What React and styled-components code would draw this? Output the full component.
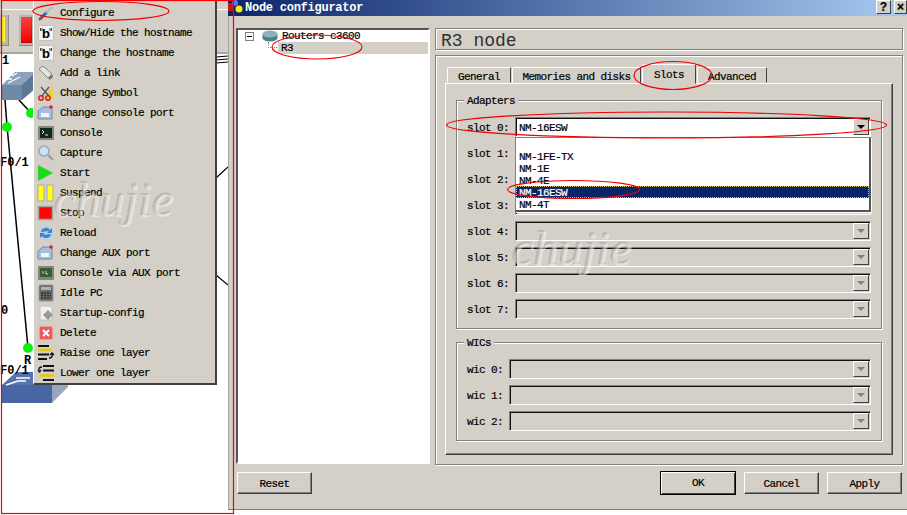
import React from 'react';
import styled, { createGlobalStyle } from 'styled-components';

const GlobalStyle = createGlobalStyle`
  html, body { margin:0; padding:0; background:#fff; overflow:hidden; }
  body {
    font-family:"Liberation Mono", monospace;
    font-size:11px;
    letter-spacing:-0.6px;
    color:#000;
    -webkit-text-stroke:0.2px #000;
  }
  * { box-sizing:border-box; }
`;

const Screen = styled.div`
  position:relative;
  width:907px;
  height:515px;
  display:flex;
  align-items:flex-start;
  overflow:hidden;
`;

/* left side: the topology window behind the dialog */
const LeftPane = styled.div`
  position:relative;
  width:228px;
  height:515px;
  display:flex;
  flex-direction:column;
  background:#d4d0c8;
`;

const Toolbar = styled.div`
  margin-top:9px;
  height:45px;
  border-top:1px solid #fff;
  border-bottom:2px solid #aaa79f;
  display:flex;
  align-items:flex-start;
  gap:10px;
  padding-top:5px;
`;

const ToolButton = styled.div`
  width:${p => p.$w}px;
  height:31px;
  padding:2px;
  background:#b9b6ae;
  border-right:1px solid #8c8a84;
  border-bottom:1px solid #8c8a84;
  &::after {
    content:'';
    display:block;
    height:100%;
    background:${p => p.$color};
    box-shadow:inset -1px -1px 0 #0003;
  }
`;

const Canvas = styled.div`
  flex:1;
  background:#fff;
`;

const CanvasDrawing = styled.svg`
  display:block;
  width:228px;
  height:461px;
  font-family:"Liberation Mono", monospace;
  font-weight:700;
  font-size:12px;
  letter-spacing:0;
`;

const Menu = styled.div`
  position:absolute;
  left:33px;
  top:0;
  width:184px;
  height:385px;
  padding-top:3px;
  background:#d4d0c8;
  border-left:1px solid #fff;
  border-right:2px solid #404040;
  border-bottom:2px solid #404040;
`;

const MenuItem = styled.div`
  height:20px;
  display:flex;
  align-items:center;
  padding-left:3px;
  gap:5px;
  white-space:nowrap;
`;

const IconBox = styled.svg`
  width:18px;
  height:18px;
  flex:none;
`;

const HostnameGlyph = styled.text`
  font-family:"Liberation Sans", sans-serif;
  font-size:13px;
  font-weight:700;
  letter-spacing:0;
  text-anchor:middle;
`;

/* right side: the dialog */
const Dialog = styled.div`
  width:679px;
  height:510px;
  display:flex;
  flex-direction:column;
  background:#d4d0c8;
  border-left:1px solid #a8a59e;
  border-bottom:1px solid #808080;
`;

const TitleBar = styled.div`
  height:16px;
  margin-left:-1px;
  display:flex;
  align-items:flex-start;
  background:linear-gradient(90deg,#0a246a,#a6caf0);
`;

const WindowIcon = styled.svg`
  width:15px;
  height:15px;
  flex:none;
`;

const TitleText = styled.div`
  flex:1;
  padding-left:2px;
  line-height:17px;
  color:#fff;
  font-size:12px;
  font-weight:700;
  letter-spacing:-0.25px;
  -webkit-text-stroke:0;
`;

const WindowButton = styled.div`
  width:${p => p.$w}px;
  height:14px;
  margin-left:${p => p.$gap}px;
  background:#d4d0c8;
  border:1px solid;
  border-color:#fff #404040 #404040 #fff;
  text-align:center;
  font-size:12px;
  line-height:12px;
  font-weight:700;
  letter-spacing:0;
  font-family:"Liberation Sans", sans-serif;
`;

const Body = styled.div`
  height:448px;
  display:flex;
  gap:5px;
  padding:12px 4px 0 7px;
`;

const Tree = styled.div`
  width:194px;
  height:436px;
  background:#fff;
  border:2px solid;
  border-color:#555 #fff #fff #555;
`;

const TreeRow = styled.div`
  height:12px;
  display:flex;
  align-items:center;
  white-space:nowrap;
  line-height:12px;
  padding-left:${p => p.$indent}px;
  background:${p => p.$selected ? 'linear-gradient(90deg,#fff 0,#fff 40px,#d4d0c8 40px)' : 'transparent'};
`;

const Expander = styled.span`
  position:relative;
  width:9px;
  height:9px;
  margin-right:8px;
  border:1px solid #808080;
  &::after {
    content:'';
    position:absolute;
    left:1px;
    top:3px;
    width:5px;
    height:1px;
    background:#000;
  }
`;

const Connector = styled.span`
  width:9px;
  height:6px;
  margin:-6px 4px 0 0;
  border-left:1px dotted #808080;
  border-bottom:1px dotted #808080;
`;

const TreeIcon = styled.svg`
  width:16px;
  height:12px;
  margin-right:4px;
`;

const Main = styled.div`
  width:468px;
  height:436px;
  display:flex;
  flex-direction:column;
  gap:5px;
`;

const NodeHeader = styled.div`
  height:22px;
  padding-left:5px;
  font-size:18px;
  line-height:25px;
  letter-spacing:0;
  color:#303030;
  -webkit-text-stroke:0;
  border:1px solid #808080;
  box-shadow:1px 1px 0 #fff, inset 1px 1px 0 #fff;
`;

const Frame = styled.div`
  flex:1;
  display:flex;
  flex-direction:column;
  padding:9px;
  border:1px solid #808080;
  box-shadow:1px 1px 0 #fff, inset 1px 1px 0 #fff;
`;

const TabBar = styled.div`
  height:18px;
  display:flex;
  align-items:flex-end;
  gap:1px;
  padding-left:2px;
`;

const Tab = styled.div`
  position:relative;
  z-index:${p => p.$selected ? 2 : 0};
  width:${p => p.$w}px;
  height:${p => p.$selected ? 20 : 16}px;
  margin-bottom:${p => p.$selected ? -1 : 0}px;
  text-align:center;
  line-height:${p => p.$selected ? 21 : 18}px;
  background:#d4d0c8;
  border:1px solid;
  border-color:#fff #404040 transparent #fff;
  border-radius:2px 2px 0 0;
`;

const TabPanel = styled.div`
  flex:1;
  padding:16px 10px 0;
  border:1px solid;
  border-color:#fff #404040 #404040 #fff;
  box-shadow:inset -1px -1px 0 #808080;
`;

const Group = styled.div`
  position:relative;
  display:flex;
  flex-direction:column;
  gap:6px;
  padding:16px 10px 9px;
  margin-bottom:13px;
  border:1px solid #808080;
  box-shadow:1px 1px 0 #fff, inset 1px 1px 0 #fff;
`;

const GroupTitle = styled.div`
  position:absolute;
  left:7px;
  top:-7px;
  padding:1px 3px 0;
  line-height:13px;
  background:#d4d0c8;
`;

const Row = styled.div`
  height:20px;
  display:flex;
  align-items:center;
`;

const RowLabel = styled.div`
  width:${p => p.$w}px;
  flex:none;
  margin-top:2px;
  white-space:nowrap;
`;

const Combo = styled.div`
  position:relative;
  flex:1;
  height:20px;
  padding-left:3px;
  line-height:20px;
  background:${p => p.$enabled ? '#fff' : '#d4d0c8'};
  border:1px solid;
  border-color:#808080 #fff #fff #808080;
  box-shadow:inset 1px 1px 0 #111;
`;

const ComboArrow = styled.div`
  position:absolute;
  right:1px;
  top:1px;
  width:16px;
  height:16px;
  background:#d4d0c8;
  border:1px solid;
  border-color:#fff #404040 #404040 #fff;
  &::after {
    content:'';
    position:absolute;
    left:3px;
    top:5px;
    border:4px solid transparent;
    border-bottom:0;
    border-top-color:${p => p.$enabled ? '#000' : '#808080'};
  }
`;

const DropList = styled.div`
  position:absolute;
  z-index:5;
  left:-1px;
  right:-1px;
  top:19px;
  height:75px;
  background:#fff;
  border-style:solid;
  border-width:1px 2px 2px 1px;
  border-color:#808080 #555 #555 #808080;
  box-shadow:1px 1px 0 #fff;
`;

const DropItem = styled.div`
  height:12px;
  padding-left:3px;
  line-height:14px;
  color:${p => p.$active ? '#fff' : '#000'};
  -webkit-text-stroke-color:${p => p.$active ? '#fff' : '#000'};
  background:${p => p.$active ? '#0a246a' : 'transparent'};
  outline:${p => p.$active ? '1px dotted #d8c070' : 'none'};
  outline-offset:-1px;
`;

const Footer = styled.div`
  flex:1;
  display:flex;
  align-items:flex-start;
  gap:8px;
  padding:8px 5px 0 8px;
`;

const Button = styled.div`
  width:${p => p.$default ? 76 : 75}px;
  height:${p => p.$default ? 24 : 22}px;
  margin-top:${p => p.$default ? -1 : 0}px;
  margin-right:${p => p.$spaced ? 'auto' : 0};
  text-align:center;
  line-height:${p => p.$default ? 23 : 22}px;
  background:#d4d0c8;
  border:1px solid;
  border-color:${p => p.$default ? '#000' : '#fff #404040 #404040 #fff'};
  box-shadow:${p => p.$default ? 'inset 1px 1px 0 #fff, inset -1px -1px 0 #404040' : 'inset -1px -1px 0 #808080'};
`;

/* things lying on top of the screenshot */
const Watermark = styled.div`
  position:absolute;
  z-index:10;
  left:${p => p.$x}px;
  top:${p => p.$y}px;
  font-family:"Liberation Serif", serif;
  font-style:italic;
  font-size:49px;
  line-height:49px;
  letter-spacing:0;
  color:#d4d0c81a;
  -webkit-text-stroke:0;
  text-shadow:1px 1px 0 #ffffff70, -1px -1px 0 #8f8c8560;
  pointer-events:none;
`;

const Marks = styled.svg`
  position:absolute;
  z-index:20;
  left:0;
  top:0;
  width:907px;
  height:515px;
  fill:none;
  stroke:#f00000;
  stroke-width:1.2;
  pointer-events:none;
`;

const icons = {
  configure: (
    <>
      <path d="M3 15 L10 8" stroke="#3a62b0" strokeWidth="3" />
      <path d="M9 9 L15 3" stroke="#b8bcc4" strokeWidth="2.4" />
      <path d="M2 16 L4 14" stroke="#c03030" strokeWidth="2" />
    </>
  ),
  hostname: (
    <>
      <rect x="1.500" y="1.500" width="15" height="15" rx="2" fill="#f4f4f2" stroke="#c4c1ba" />
      <path d="M3.500 4v3M5 4v3M13 4v3M14.500 4v3" stroke="#444" />
      <HostnameGlyph x="9" y="14">b</HostnameGlyph>
    </>
  ),
  link: (
    <>
      <path d="M2 5 L6 2 L15 10 L11 14 Z" fill="#e4e4e4" stroke="#8a8a8a" />
      <path d="M11 14 L15 10 L16 13 L13 16 Z" fill="#777" />
    </>
  ),
  symbol: (
    <>
      <path d="M16 2 V15 H6 Z" fill="#f0d040" />
      <path d="M4 3 L12 12 M12 3 L5 12" stroke="#555" strokeWidth="1.300" />
      <circle cx="4" cy="14" r="2.200" fill="none" stroke="#d02020" strokeWidth="1.500" />
      <circle cx="11" cy="14" r="2.200" fill="none" stroke="#d02020" strokeWidth="1.500" />
    </>
  ),
  port: (
    <>
      <path d="M1 7 L6 3 H15 V15 H1 Z" fill="#a8bede" stroke="#7088b0" />
      <rect x="4" y="9" width="8" height="4" fill="#f2f4f8" />
      <circle cx="14" cy="3" r="1.800" fill="#e02020" />
    </>
  ),
  console: (
    <>
      <rect x="1" y="2" width="16" height="14" rx="1" fill="#7f8a7e" />
      <rect x="3" y="4" width="12" height="10" fill="#12281c" />
      <path d="M5 6 L7 8 L5 10 M8 11 H11" stroke="#e6e6e6" fill="none" />
    </>
  ),
  capture: (
    <>
      <circle cx="7" cy="7" r="5" fill="#cfe0f4" stroke="#8ea6c8" strokeWidth="1.500" />
      <path d="M11 11 L16 16" stroke="#9c9c9c" strokeWidth="2.400" />
    </>
  ),
  start: <path d="M1 1 L16 9 L1 17 Z" fill="#10e010" stroke="#b0b0a8" strokeWidth=".6" />,
  suspend: (
    <>
      <rect x="1" y="1" width="6" height="16" fill="#ffff10" stroke="#aaa" />
      <rect x="10" y="1" width="6" height="16" fill="#ffff10" stroke="#aaa" />
    </>
  ),
  stop: <rect x="1.500" y="2.500" width="14" height="13" fill="#f80808" stroke="#a8a49c" strokeWidth="1.500" />,
  reload: (
    <>
      <circle cx="9" cy="9" r="7.500" fill="#bcd0e8" />
      <path d="M4 8 A5 5 0 0 1 13 6 L15 4 V9 H10 L12 7 M14 10 A5 5 0 0 1 5 12 L3 14 V9 H8 L6 11" fill="#3e82c8" />
    </>
  ),
  auxConsole: (
    <>
      <rect x="1" y="2" width="16" height="14" rx="1" fill="#80887c" />
      <rect x="3" y="4" width="12" height="9" fill="#3a5a34" />
      <path d="M6 7v3M9 7v3h2" stroke="#c8d8c0" fill="none" />
    </>
  ),
  idle: (
    <>
      <rect x="2" y="1" width="14" height="16" rx="1" fill="#6a6c6a" stroke="#9a9a96" />
      <rect x="4" y="3" width="10" height="3" fill="#aeb6ae" />
      <path d="M4 9h10M4 11.500h10M4 14h10" stroke="#2e2e2e" strokeWidth="1.400" strokeDasharray="2 1" />
    </>
  ),
  startup: (
    <>
      <path d="M3 2 H13 L15 4 V16 H3 Z" fill="#f0efec" stroke="#c4c2bc" />
      <path d="M11 6 L16 11 L11 16 L6 11 Z" fill="#9a9a9a" />
    </>
  ),
  remove: (
    <>
      <rect x="2" y="2" width="14" height="14" rx="2" fill="#e85c5c" stroke="#e8b8b8" strokeWidth="1.500" />
      <path d="M6 6 L12 12 M12 6 L6 12" stroke="#fff" strokeWidth="2" />
    </>
  ),
  raise: (
    <>
      <path d="M1 2h11M1 15h9" stroke="#111" strokeWidth="2" />
      <path d="M1 6h14" stroke="#e8c810" strokeWidth="2.600" />
      <path d="M1 10.500h11" stroke="#111" strokeWidth="2" />
      <path d="M12 14 Q16 14 15 10 M13 11 L15 9 L17 11" stroke="#111" fill="none" strokeWidth="1.300" />
    </>
  ),
  lower: (
    <>
      <path d="M6 2h11M6 6.500h11M6 16h11" stroke="#111" strokeWidth="2" />
      <path d="M3 11.500h14" stroke="#e8c810" strokeWidth="2.600" />
      <path d="M5 3 Q1 3 2 7 M1 6 L2.500 8 L4 6" stroke="#111" fill="none" strokeWidth="1.300" />
    </>
  ),
};

const menuItems = [
  ['configure', 'Configure'],
  ['hostname', 'Show/Hide the hostname'],
  ['hostname', 'Change the hostname'],
  ['link', 'Add a link'],
  ['symbol', 'Change Symbol'],
  ['port', 'Change console port'],
  ['console', 'Console'],
  ['capture', 'Capture'],
  ['start', 'Start'],
  ['suspend', 'Suspend'],
  ['stop', 'Stop'],
  ['reload', 'Reload'],
  ['port', 'Change AUX port'],
  ['auxConsole', 'Console via AUX port'],
  ['idle', 'Idle PC'],
  ['startup', 'Startup-config'],
  ['remove', 'Delete'],
  ['raise', 'Raise one layer'],
  ['lower', 'Lower one layer'],
];

function Topology() {
  return (
    <CanvasDrawing viewBox="0 54 228 461">
      <path d="M5 100 L7 126 L28 348" stroke="#000" strokeWidth="1.500" fill="none" />
      <path d="M19 100 L31 113" stroke="#000" strokeWidth="1.500" />
      <path d="M216 178 L228 167 M216 275 L228 285" stroke="#000" strokeWidth="1.200" />
      <path d="M216 57 L228 56 M216 60 L228 59 M216 63 L228 62" stroke="#000" strokeWidth="1.200" />
      <path d="M2 85 L15 72 H36 V85 Z" fill="#8ca2bc" />
      <path d="M2 85 H22 V100 H2 Z" fill="#6d8aa8" />
      <path d="M22 85 L36 72 V88 L22 100 Z" fill="#5c7896" />
      <path d="M3 79 H12 M12 76 L17 73 M8 83 L20 77" stroke="#fff" strokeWidth="1.300" />
      <circle cx="7" cy="127" r="5" fill="#10f010" />
      <circle cx="31" cy="113" r="5" fill="#10f010" />
      <circle cx="28" cy="348" r="5" fill="#10f010" />
      <path d="M2 385 L16 372 H68 L52 385 Z" fill="#5674ae" />
      <path d="M2 385 H52 V403 H2 Z" fill="#4766a4" />
      <path d="M52 385 L68 372 V387 L52 403 Z" fill="#9aa6bc" />
      <path d="M6 385 L18 381 H26 M16 378 H30" stroke="#fff" strokeWidth="1.600" fill="none" />
      <text x="2" y="64">1</text>
      <text x="0" y="166">F0/1</text>
      <text x="1" y="314">0</text>
      <text x="24" y="364">R</text>
      <text x="0" y="374">F0/1</text>
    </CanvasDrawing>
  );
}

function Slot({ label, labelWidth, enabled, value, children }) {
  return (
    <Row>
      <RowLabel $w={labelWidth}>{label}</RowLabel>
      <Combo $enabled={enabled}>
        {value}
        <ComboArrow $enabled={enabled} />
        {children}
      </Combo>
    </Row>
  );
}

const adapters = ['', 'NM-1FE-TX', 'NM-1E', 'NM-4E', 'NM-16ESW', 'NM-4T'];

export default function App() {
  return (
    <Screen>
      <GlobalStyle />
      <LeftPane>
        <Toolbar>
          <ToolButton $w={9} $color="linear-gradient(90deg,#ffe020,#ffff30)" />
          <ToolButton $w={16} $color="linear-gradient(180deg,#ff4040,#f00000)" />
        </Toolbar>
        <Canvas>
          <Topology />
        </Canvas>
        <Menu>
          {menuItems.map(([icon, label]) => (
            <MenuItem key={label}>
              <IconBox viewBox="0 0 18 18">{icons[icon]}</IconBox>
              {label}
            </MenuItem>
          ))}
        </Menu>
      </LeftPane>

      <Dialog>
        <TitleBar>
          <WindowIcon viewBox="0 0 15 15">
            <rect x="0" y="3" width="6" height="8" fill="#c01818" />
            <circle cx="7" cy="3" r="3" fill="#6c70e0" />
            <circle cx="11" cy="9" r="3.500" fill="#f4f010" />
          </WindowIcon>
          <TitleText>Node configurator</TitleText>
          <WindowButton $w={15} $gap={0}>?</WindowButton>
          <WindowButton $w={13} $gap={3}>×</WindowButton>
        </TitleBar>
        <Body>
          <Tree>
            <TreeRow $indent={7}>
              <Expander />
              <TreeIcon viewBox="0 0 16 12">
                <ellipse cx="8" cy="8" rx="7.500" ry="3.500" fill="#4f7f88" />
                <rect x=".5" y="4" width="15" height="4" fill="#4f7f88" />
                <ellipse cx="8" cy="4" rx="7.500" ry="3.500" fill="#88b4bc" />
              </TreeIcon>
              Routers c3600
            </TreeRow>
            <TreeRow $indent={30} $selected>
              <Connector />
              R3
            </TreeRow>
          </Tree>
          <Main>
            <NodeHeader>R3 node</NodeHeader>
            <Frame>
              <TabBar>
                <Tab $w={64}>General</Tab>
                <Tab $w={129}>Memories and disks</Tab>
                <Tab $w={54} $selected>Slots</Tab>
                <Tab $w={70}>Advanced</Tab>
              </TabBar>
              <TabPanel>
                <Group>
                  <GroupTitle>Adapters</GroupTitle>
                  <Slot label="slot 0:" labelWidth={48} enabled value="NM-16ESW">
                    <DropList>
                      {adapters.map(name => (
                        <DropItem key={name} $active={name === 'NM-16ESW'}>{name}</DropItem>
                      ))}
                    </DropList>
                  </Slot>
                  {[1, 2, 3, 4, 5, 6, 7].map(n => (
                    <Slot key={n} label={`slot ${n}:`} labelWidth={48} />
                  ))}
                </Group>
                <Group>
                  <GroupTitle>WICs</GroupTitle>
                  {[0, 1, 2].map(n => (
                    <Slot key={n} label={`wic ${n}:`} labelWidth={42} />
                  ))}
                </Group>
              </TabPanel>
            </Frame>
          </Main>
        </Body>
        <Footer>
          <Button $spaced>Reset</Button>
          <Button $default>OK</Button>
          <Button>Cancel</Button>
          <Button>Apply</Button>
        </Footer>
      </Dialog>

      <Watermark $x={54} $y={175}>chujie</Watermark>
      <Watermark $x={512} $y={224}>chujie</Watermark>

      <Marks viewBox="0 0 907 515">
        <rect x="1.500" y="0.500" width="232" height="513" />
        <ellipse cx="101" cy="11" rx="68" ry="9.500" />
        <ellipse cx="317" cy="47" rx="45" ry="12" />
        <ellipse cx="673" cy="75.500" rx="39" ry="14" />
        <ellipse cx="666.500" cy="125" rx="220" ry="13" />
        <ellipse cx="573.500" cy="189.500" rx="66" ry="9" />
      </Marks>
    </Screen>
  );
}
